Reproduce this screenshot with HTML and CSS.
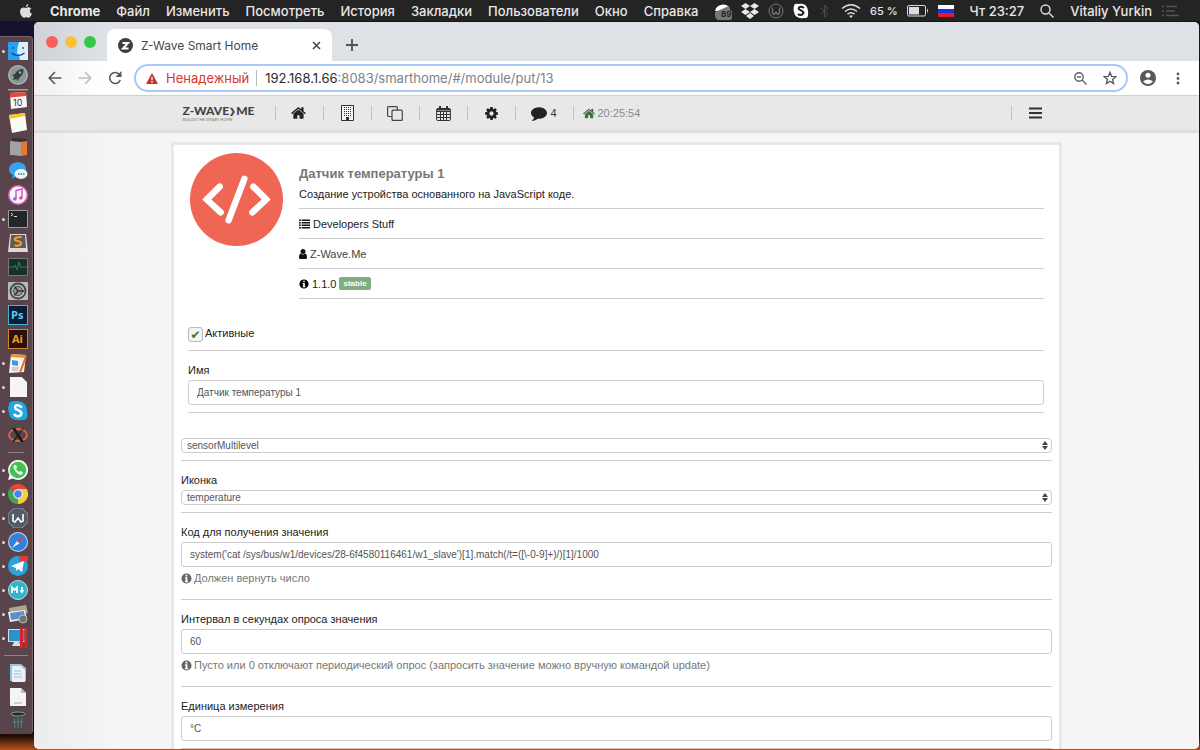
FILE: index.html
```html
<!DOCTYPE html>
<html lang="ru">
<head>
    <meta charset="UTF-8">
    <meta name="viewport" content="width=device-width, initial-scale=1.0">
    <title>Z-Wave Smart Home</title>
    <link rel="stylesheet" href="styles.css">
</head>

<body>
    <!-- Shared icons -->
    <svg class="sprite" aria-hidden="true">
        <symbol id="home" viewBox="0 0 1792 1792"><path d="M1408 992v480q0 26-19 45t-45 19h-384v-384h-256v384h-384q-26 0-45-19t-19-45v-480q0-1 .5-3t.5-3l575-474 575 474q1 2 1 6zm223-69l-62 74q-8 9-21 11h-3q-13 0-21-7l-692-577-692 577q-12 8-24 7-13-2-21-11l-62-74q-8-10-7-23.5t11-21.5l719-599q32-26 76-26t76 26l244 204v-195q0-14 9-23t23-9h192q14 0 23 9t9 23v408l219 182q10 8 11 21.5t-7 23.5z"/></symbol>
        <symbol id="info" viewBox="0 0 12 12"><path fill-rule="evenodd" d="M6 .5a5.500 5.500 0 1 0 0 11a5.500 5.500 0 0 0 0-11zM5 2h2v1.700H5zM4.300 4.700H7v3.900h.8V10H4.300V8.600H5V6h-.7z"/></symbol>
        <symbol id="updown" viewBox="0 0 6 9"><path d="M3 0l3 4H0zM3 9l3-4H0z"/></symbol>
    </svg>

    <header class="menubar">
        <nav class="menubar-menus">
            <svg class="apple" viewBox="0 0 12 14" fill="#ddd"><path d="M8.300 0c.1 1.500-1 2.900-2.400 3C5.800 1.500 7 .2 8.300 0zM6.200 3.900c.7 0 1.500-.7 2.700-.6 1 .1 1.900.5 2.500 1.300-2.200 1.400-1.800 4.300.5 5.200-.5 1.500-1.800 4-3.200 4-.9 0-1.300-.5-2.400-.5s-1.500.5-2.300.5C2.300 13.800 0 10.300 0 7.600c0-2.900 1.900-4.200 3.500-4.200 1.100 0 2 .5 2.700.5z"/></svg>
            <strong>Chrome</strong>
            <span>Файл</span>
            <span>Изменить</span>
            <span>Посмотреть</span>
            <span>История</span>
            <span>Закладки</span>
            <span>Пользователи</span>
            <span>Окно</span>
            <span>Справка</span>
        </nav>
        <div class="menubar-status">
            <svg width="18" height="18" viewBox="0 0 18 18"><path d="M1 9a8 8 0 0 1 15-2L5 9z" fill="#fff"/><path d="M1 10L15 4l1.500 5H18v6q0 3-3 3H5q-3 0-4-4z" fill="#777"/><text x="7" y="15" class="badge-text" fill="#222">89</text></svg>
            <svg width="18" height="16" viewBox="0 0 18 16" fill="#e8e8e8"><path d="M4.500 0L9 3 4.500 6 0 3zM13.500 0L18 3l-4.500 3L9 3zM4.500 6L9 9l-4.500 3L0 9zM13.500 6L18 9l-4.500 3L9 9zM9 10l4 3-4 3-4-3z"/></svg>
            <svg width="16" height="16" viewBox="0 0 16 16" fill="none" stroke="#777"><circle cx="8" cy="8" r="7"/><path d="M4.500 4.500V10l1.500 1.500L8 9l2 2.500 1.500-1.500V4.500" stroke-width="1.300"/></svg>
            <svg width="16" height="16" viewBox="0 0 16 16"><path d="M1 3q0-3 4-2 9-2 10 7 1 8-4 7-9 1-10-6-1-3 0-6z" fill="#fff"/><path d="M11 5Q8 3 6 4.500C4 7 11 7.500 10.500 10 9 13 6 12 5 11" fill="none" stroke="#222" stroke-width="2"/></svg>
            <svg width="14" height="16" viewBox="0 0 14 16" fill="none" stroke="#4c4c4c"><path d="M3 5l7 6-3.500 3V2L10 5l-7 6"/></svg>
            <svg class="wifi" width="20" height="16" viewBox="0 0 20 16" fill="none" stroke="#ddd" stroke-width="1.500"><path d="M1 5.500q9-7.500 18 0M4 8.500q6-5 12 0M6.500 11.200q3.500-2.700 7 0"/><path d="M8.200 13L10 15l1.800-2q-1.800-1.300-3.600 0z" fill="#ddd" stroke="none"/></svg>
            <span class="percent">65 %</span>
            <svg width="22" height="12" viewBox="0 0 22 12"><rect x=".5" y=".5" width="18" height="10.500" rx="1.500" fill="none" stroke="#ddd"/><rect x="2" y="2" width="10" height="7.500" fill="#ddd"/><path d="M20 3.500q2 2 0 4.500z" fill="#ddd"/></svg>
            <svg class="flag" width="16" height="12" viewBox="0 0 16 12"><path fill="#fff" d="M0 0h16v4H0z"/><path fill="#1c2ee0" d="M0 4h16v4H0z"/><path fill="#e01c24" d="M0 8h16v4H0z"/></svg>
        </div>
        <div class="menubar-user">
            <span>Чт 23:27</span>
            <svg width="14" height="14" viewBox="0 0 14 14" fill="none" stroke="#ddd" stroke-width="1.400"><circle cx="5.500" cy="5.500" r="4.500"/><path d="M9 9l4.500 4.500"/></svg>
            <span>Vitaliy Yurkin</span>
            <svg class="list" width="17" height="12" viewBox="0 0 17 12" stroke="#555" stroke-width="1.500"><path d="M0 1.500h2M4 1.500h11M0 6h2M4 6h9M0 10.500h2M4 10.500h13"/></svg>
        </div>
    </header>

    <div class="desktop">
        <aside class="dock">
            <div class="dock-item running"><svg viewBox="0 0 20 20"><rect y="1" width="20" height="18" rx="1" fill="#2a9df4"/><path d="M11 1h9v18h-8q-1-3-1-6H9q0-7 2-12z" fill="#dfeefa"/><path d="M5 6v2M15 6v2M3.500 12q6.500 5 13 0" fill="none" stroke="#17406e" stroke-width="1.200"/></svg></div>
            <div class="dock-item"><svg viewBox="0 0 20 20"><circle cx="10" cy="10" r="10" fill="#aab1b3"/><circle cx="10" cy="10" r="8.500" fill="#8c9698"/><path d="M15.500 4q-6 0-8.500 5l-3 1 2 1.500L5 15l3.500-1L10 16l1-3q4.500-3 4.500-9z" fill="#333d42"/><circle cx="12" cy="7.500" r="1.200" fill="#aab1b3"/></svg></div>
            <div class="dock-item"><svg viewBox="0 0 20 20"><path d="M0 0h20v1.500H0z" fill="#c093a4"/><path d="M2 4l16-1 1 15-16 2z" fill="#f7f7f7"/><path d="M2 4l16-1v4L2 8.500z" fill="#e7483e"/><text x="5" y="17" class="cal-text" fill="#333">10</text></svg></div>
            <div class="dock-item"><svg viewBox="0 0 20 20"><path d="M1 2l16-2 2 17-15 3z" fill="#fbfbf6"/><path d="M1 2l16-2v3L1.500 6z" fill="#f7c52c"/></svg></div>
            <div class="dock-item"><svg viewBox="0 0 20 20"><path d="M4 1l14 1 1 16-14 1z" fill="#333"/><path d="M12 5l7-1v14l-6 1z" fill="#e9772e"/><path d="M2 4l11 1v14L2 18z" fill="#a3a3a3"/></svg></div>
            <div class="dock-item"><svg viewBox="0 0 20 20"><path d="M1 9C1-1 18-1 18 8c0 5-4 7-9 7l-5 3 1-4q-4-2-4-5z" fill="#36a3f1"/><ellipse cx="13" cy="13" rx="6.500" ry="5" fill="#edf5fb"/><path d="M10 13h1.500M12.500 13H14M15 13h1.500" stroke="#3a73a8" stroke-width="1.600"/></svg></div>
            <div class="dock-item"><svg viewBox="0 0 20 20"><circle cx="10" cy="10" r="10" fill="#df65bb"/><circle cx="10" cy="10" r="8.500" fill="#faf7fb"/><path d="M8 14V5.500l6-1.500v9" fill="none" stroke="#c552ce" stroke-width="1.400"/><circle cx="6.800" cy="14" r="1.800" fill="#8f66e8"/><circle cx="12.800" cy="13" r="1.800" fill="#ee4d87"/></svg></div>
            <div class="dock-item running"><svg viewBox="0 0 20 20"><rect y="1" width="20" height="18" rx="1" fill="#9b9b9b"/><rect x="1" y="2" width="18" height="16" fill="#20262a"/><path d="M3 4l2 1.500L3 7M6 7.500h3" fill="none" stroke="#ddd"/></svg></div>
            <div class="dock-item"><svg viewBox="0 0 20 20"><path d="M2 1h16l2 18H0z" fill="#d9d9d9"/><path d="M3 2h14l1 13H2z" fill="#5b5b5b"/><path d="M13.500 4Q6 4 7 7c1 1.500 6 .5 6 3.500 0 2-3 2.500-6.500 2" fill="none" stroke="#f79a2c" stroke-width="2.200"/></svg></div>
            <div class="dock-item"><svg viewBox="0 0 20 20"><rect y="1" width="20" height="18" rx="1" fill="#777"/><rect x="1" y="2" width="18" height="16" fill="#16302c"/><path d="M1 10h5l1-2 2 5 2-8 2 6 1-1h5" fill="none" stroke="#3a7560"/></svg></div>
            <div class="dock-item"><svg viewBox="0 0 20 20"><rect y="1" width="20" height="18" rx="1" fill="#b6babb"/><circle cx="10" cy="10" r="7.500" fill="none" stroke="#444" stroke-width="1.800"/><circle cx="10" cy="10" r="4.500" fill="#999" stroke="#444"/><path d="M10 10h6M10 10L6.500 5.500M10 10l-3.500 4.500" stroke="#333" stroke-width="1.500"/></svg></div>
            <div class="dock-item"><svg viewBox="0 0 20 20"><rect x=".5" y=".5" width="19" height="19" fill="#0c1b38" stroke="#43b5cf"/><text x="3" y="14" class="adobe-text" fill="#5fd0ee">Ps</text></svg></div>
            <div class="dock-item"><svg viewBox="0 0 20 20"><rect x=".5" y=".5" width="19" height="19" fill="#2b1208" stroke="#d98328"/><text x="4" y="14" class="adobe-text" fill="#f39a33">Ai</text></svg></div>
            <div class="dock-item running"><svg viewBox="0 0 20 20"><path d="M3 1l15 1-2 17-15 1z" fill="#f6f3ec"/><path d="M3 1l15 1v3L3 4z" fill="#ee9128"/><path d="M4 7l6 1v5l-6-1z" fill="#4693df"/><path d="M4 15h7M4 17h6" stroke="#aaa"/><path d="M18 3l-5 14-1 2" stroke="#e5701d" stroke-width="2"/></svg></div>
            <div class="dock-item running"><svg viewBox="0 0 20 20"><path d="M2 0h12l5 5v15H2z" fill="#f5f5f5"/><path d="M14 0h5v5z" fill="#4d4d4d"/></svg></div>
            <div class="dock-item running"><svg viewBox="0 0 20 20"><path d="M1 4q0-4 5-4 13-1 13 10 2 9-4 9Q1 21 1 11-1 7 1 4z" fill="#21a6e6"/><path d="M14 6.500Q10 3 7.500 5c-3 4 6.500 4 6 7.500-1 4-6 3-7.500.5" fill="none" stroke="#fff" stroke-width="2.600"/></svg></div>
            <div class="dock-item"><svg viewBox="0 0 20 20"><ellipse cx="10" cy="10" rx="9" ry="6" fill="none" stroke="#cf6a4a" stroke-width="1.800"/><path d="M4 3h3l9 14h-3zM15 3h1L6 17H4z" fill="#1a1a1a"/></svg></div>
            <hr class="dock-rule">
            <div class="dock-item running"><svg viewBox="0 0 20 20"><path d="M0 20l1.500-5A10 10 0 1 1 5 18.500z" fill="#f5f5f5"/><circle cx="10" cy="10" r="8.300" fill="#3fc351"/><path d="M6.500 5q-2 2 0 5 4 6 7.500 4.500l1-2-2.500-1.500-1.500 1Q9 11 8 9l1-1.500L8 5z" fill="#fff"/></svg></div>
            <div class="dock-item running"><svg viewBox="0 0 20 20"><path d="M10 10L1.300 5a10 10 0 0 1 17.400 0z" fill="#e1483b"/><path d="M10 10L1.300 5A10 10 0 0 0 10 20l4-8z" fill="#3da756"/><path d="M10 10L10 5h8.700A10 10 0 0 1 10 20z" fill="#f8cc3c"/><circle cx="10" cy="10" r="4.800" fill="#f5f5f5"/><circle cx="10" cy="10" r="3.700" fill="#4285f4"/></svg></div>
            <div class="dock-item running"><svg viewBox="0 0 20 20"><path d="M6 0h8l6 6v8l-6 6H6l-6-6V6z" fill="#515d69" stroke="#8d98a2"/><path d="M5 6v7l2 1 3-4 3 4 2-1V6" fill="none" stroke="#fff" stroke-width="1.600"/></svg></div>
            <div class="dock-item running"><svg viewBox="0 0 20 20"><circle cx="10" cy="10" r="10" fill="#d0d7de"/><circle cx="10" cy="10" r="9" fill="#2c83e0"/><path d="M16 4l-4.500 7.500L9 9z" fill="#e74236"/><path d="M4 16l5-7 2.500 2.500z" fill="#eee"/></svg></div>
            <div class="dock-item running"><svg viewBox="0 0 20 20"><circle cx="10" cy="10" r="10" fill="#2ca2dc"/><path d="M3 10l13-5-2 11-4-3-2 2v-3z" fill="#fff"/><rect x="11" width="9" height="5" rx="1" fill="#e33b3b"/></svg></div>
            <div class="dock-item running"><svg viewBox="0 0 20 20"><circle cx="10" cy="10" r="9.500" fill="#30b4c9" stroke="#b7e2e9"/><path d="M4 13V7.500L6.500 10 9 7.500V13M14 7v5" fill="none" stroke="#fff" stroke-width="1.800"/><path d="M11.500 10h5L14 13.500z" fill="#fff"/></svg></div>
            <div class="dock-item running"><svg viewBox="0 0 20 20"><path d="M1 4l17-3 2 8L2 13z" fill="#aba694"/><path d="M0 8l17-2 2 9-17 3z" fill="#f1f1f1"/><path d="M2 9l14-2 1 7-14 2z" fill="#608dc9"/><circle cx="15" cy="15" r="4" fill="#737373" stroke="#bbb"/></svg></div>
            <div class="dock-item running"><svg viewBox="0 0 20 20"><rect y="1" width="18" height="13" fill="#d7dce0"/><rect x="1" y="2" width="16" height="11" fill="#2993ce"/><path d="M6 14h5l2 4H4z" fill="#ddd"/><path d="M13.500 0v20M18 0v20" stroke="#d82424" stroke-width="3"/></svg></div>
            <hr class="dock-rule wide">
            <div class="dock-item"><svg viewBox="0 0 20 20"><path d="M2 1h11l5 4v13H2z" fill="#8ec5e4"/><path d="M4 3h9l4 4v12H4z" fill="#e8f2f7"/><path d="M6 8h7M6 11h8M6 14h8" stroke="#aac0cc"/></svg></div>
            <div class="dock-item"><svg viewBox="0 0 20 20"><path d="M2 1h11l5 5v13H2z" fill="#f4f4f4"/><path d="M13 1v5h5z" fill="#bbb"/><path d="M6 16h8" stroke="#aaa"/></svg></div>
            <div class="dock-item"><svg viewBox="0 0 20 20"><path d="M3 3h14l-2 16H5z" fill="#444b4b"/><ellipse cx="10" cy="3" rx="7" ry="2" fill="#252929" stroke="#899"/><path d="M6 7l1 10M10 7v10M14 7l-1 10M5 11h10" stroke="#6d7777"/></svg></div>
        </aside>

        <main class="window">
            <div class="tabstrip">
                <div class="lights"><i class="light red"></i><i class="light yellow"></i><i class="light green"></i></div>
                <div class="tab">
                    <svg width="15" height="15" viewBox="0 0 15 15"><circle cx="7.500" cy="7.500" r="7.500" fill="#3c3f42"/><path d="M4.500 5h5.500l-5 5.500h5.500" fill="none" stroke="#fff" stroke-width="2"/></svg>
                    <span class="tab-title">Z-Wave Smart Home</span>
                    <button type="button" class="icon-btn" aria-label="Закрыть вкладку"><svg width="9" height="9" viewBox="0 0 9 9" stroke="#444" stroke-width="1.500"><path d="M1 1l7 7M8 1L1 8"/></svg></button>
                </div>
                <button type="button" class="icon-btn new-tab" aria-label="Новая вкладка"><svg width="12" height="12" viewBox="0 0 12 12" stroke="#505357" stroke-width="1.800"><path d="M6 0v12M0 6h12"/></svg></button>
            </div>

            <div class="toolbar">
                <button type="button" class="icon-btn" aria-label="Назад"><svg width="14" height="14" viewBox="0 0 14 14" fill="none" stroke="#55585c" stroke-width="1.600"><path d="M13.500 7H1.500M7 1L1.200 7 7 13"/></svg></button>
                <button type="button" class="icon-btn" aria-label="Вперёд"><svg width="14" height="14" viewBox="0 0 14 14" fill="none" stroke="#bcbec1" stroke-width="1.600"><path d="M.5 7h12M7 1l5.800 6L7 13"/></svg></button>
                <button type="button" class="icon-btn" aria-label="Обновить"><svg width="14" height="14" viewBox="0 0 14 14"><path d="M12.300 9A5.500 5.500 0 1 1 11.500 3.500" fill="none" stroke="#55585c" stroke-width="1.600"/><path d="M13.500 0v6h-6z" fill="#55585c"/></svg></button>
                <div class="omnibox">
                    <svg width="12" height="11" viewBox="0 0 12 11"><path d="M6 0l6 11H0z" fill="#c5322b"/><path d="M6 4v3.300M6 8.300v1.400" stroke="#fff" stroke-width="1.300"/></svg>
                    <span class="insecure">Ненадежный</span>
                    <span class="url"><b>192.168.1.66</b>:8083/smarthome/#/module/put/13</span>
                    <button type="button" class="icon-btn" aria-label="Масштаб"><svg width="13" height="13" viewBox="0 0 13 13" fill="none" stroke="#5f6368" stroke-width="1.400"><circle cx="5" cy="5" r="4.200"/><path d="M8 8l4.500 4.500M3 5h4"/></svg></button>
                    <button type="button" class="icon-btn" aria-label="В закладки"><svg width="14" height="14" viewBox="0 0 14 14" fill="none" stroke="#55585c" stroke-width="1.300"><path d="M7 1.300l1.600 4 4.300.3-3.300 2.800 1 4.200L7 10.300l-3.600 2.300 1-4.200L1.100 5.600l4.300-.3z"/></svg></button>
                </div>
                <button type="button" class="icon-btn" aria-label="Профиль"><svg width="16" height="16" viewBox="0 0 16 16"><circle cx="8" cy="8" r="8" fill="#55585c"/><circle cx="8" cy="5.300" r="2.500" fill="#fff"/><path d="M3 11.500q5-4 10 0-5 5-10 0z" fill="#fff"/></svg></button>
                <button type="button" class="icon-btn dots" aria-label="Меню"><svg width="4" height="13" viewBox="0 0 4 13" fill="#55585c"><circle cx="2" cy="2" r="1.400"/><circle cx="2" cy="6.500" r="1.400"/><circle cx="2" cy="11" r="1.400"/></svg></button>
            </div>

            <div class="page">
                <div class="navbar">
                    <nav class="navbar-inner">
                        <a href="#" class="logo"><span class="logo-name">Z-WAVE<i>&#x276F;</i>ME</span><small>BUILDS THE SMART HOME</small></a>
                        <a href="#" class="nav-item" aria-label="Главная"><svg width="16" height="16"><use href="#home"/></svg></a>
                        <a href="#" class="nav-item" aria-label="Комнаты"><svg width="13" height="16" viewBox="0 0 13 16"><path d="M.5.5h12v15H.5z" fill="#f4f4f4" stroke="#333"/><path d="M3.500 2v9M5.500 2v9M7.500 2v9M9.500 2v9" stroke="#333" stroke-dasharray="1 1"/><path d="M5 12h3v3H5z" fill="#333"/></svg></a>
                        <a href="#" class="nav-item" aria-label="Элементы"><svg width="16" height="15" viewBox="0 0 16 15" fill="none" stroke="#444" stroke-width="1.200"><path d="M5 10.500H1.500q-.9 0-.9-.9V1.500q0-.9.9-.9h8q.9 0 .9.9V4"/><rect x="5" y="4.200" width="10.300" height="10.200" rx="1"/></svg></a>
                        <a href="#" class="nav-item" aria-label="События"><svg width="15" height="15" viewBox="0 0 15 15" fill="none" stroke="#333"><rect x=".6" y="2.500" width="13.800" height="12" rx="1"/><path d="M1 3.500h13" stroke-width="2"/><path d="M4 0v4M11 0v4" stroke-width="2"/><path d="M1 8.500h13M1 11.500h13M4.500 5v9M7.500 5v9M10.500 5v9M1 5.500h13"/></svg></a>
                        <a href="#" class="nav-item" aria-label="Настройки"><svg width="15" height="15" viewBox="0 0 1792 1792"><path d="M1152 896q0-106-75-181t-181-75-181 75-75 181 75 181 181 75 181-75 75-181zm512-109v222q0 12-8 23t-20 13l-185 28q-19 54-39 91 35 50 107 138 10 12 10 25t-9 23q-27 37-99 108t-94 71q-12 0-26-9l-138-108q-44 23-91 38-16 136-29 186-7 28-36 28h-222q-14 0-24.500-8.500t-11.500-21.500l-28-184q-49-16-90-37l-141 107q-10 9-25 9-14 0-25-11-126-114-165-168-7-10-7-23 0-12 8-23 15-21 51-66.500t54-70.500q-27-50-41-99l-183-27q-13-2-21-12.500t-8-23.500v-222q0-12 8-23t19-13l186-28q14-46 39-92-40-57-107-138-10-12-10-24 0-10 9-23 26-36 98.500-107.500t94.500-71.500q13 0 26 10l138 107q44-23 91-38 16-136 29-186 7-28 36-28h222q14 0 24.500 8.500t11.500 21.500l28 184q49 16 90 37l142-107q9-9 24-9 13 0 25 10 129 119 165 170 7 8 7 22 0 12-8 23-15 21-51 66.500t-54 70.500q26 50 41 98l183 28q13 2 21 12.500t8 23.500z"/></svg></a>
                        <a href="#" class="nav-item messages"><svg width="16" height="16" viewBox="0 0 1792 1792"><path d="M1792 896q0 174-120 321.500t-326 233-450 85.500q-70 0-145-8-198 175-460 242-49 14-114 22-17 2-30.500-9t-17.500-29v-1q-3-4-.5-12t2-10 4.500-9.500l6-9 7-8.500 8-9q7-8 31-34.500t34.500-38 31-39.500 32.500-51 27-59 26-76q-157-89-247.500-220t-90.500-281q0-130 71-248.500t191-204.500 286-136.500 348-50.500q244 0 450 85.500t326 233 120 321.500z"/></svg>4</a>
                        <span class="nav-item time"><svg width="13" height="13"><use href="#home"/></svg>20:25:54</span>
                        <button type="button" class="nav-item burger" aria-label="Меню"><svg width="13" height="12" viewBox="0 0 13 12" stroke="#333" stroke-width="2"><path d="M0 1.500h13M0 6h13M0 10.500h13"/></svg></button>
                    </nav>
                </div>

                <form class="card">
                    <section class="summary">
                        <svg class="module-icon" viewBox="0 0 94 94"><circle cx="47" cy="47" r="47" fill="#ef6655"/><path d="M30 34L17 47l14 13M64 34l13 13-14 13M55 26L39 68" fill="none" stroke="#fff" stroke-width="6.500" stroke-linecap="round"/></svg>
                        <div class="info">
                            <div class="info-head">
                                <h1>Датчик температуры 1</h1>
                                <p>Создание устройства основанного на JavaScript коде.</p>
                            </div>
                            <p class="info-row"><svg width="11" height="10" viewBox="0 0 11 10" stroke="#111" stroke-width="1.600"><path d="M0 1.200h1.800M2.600 1.200H11M0 3.700h1.800M2.600 3.700H11M0 6.200h1.800M2.600 6.200H11M0 8.700h1.800M2.600 8.700H11"/></svg>Developers Stuff</p>
                            <p class="info-row author"><svg width="8" height="10" viewBox="0 0 8 10" fill="#111"><circle cx="4" cy="2.600" r="2.500"/><path d="M1.700 4.500Q4 6.500 6.300 4.500 8 5 8 8.500 8 10 6.800 10H1.200Q0 10 0 8.500 0 5 1.700 4.500z"/></svg><a href="#">Z-Wave.Me</a></p>
                            <p class="info-row"><svg width="10" height="10"><use href="#info"/></svg>1.1.0 <span class="label-stable">stable</span></p>
                        </div>
                    </section>

                    <div class="inset">
                        <div class="group active">
                            <input type="checkbox" id="active" class="check" checked>
                            <label for="active">Активные</label>
                        </div>
                        <div class="group">
                            <label for="name">Имя</label>
                            <input type="text" id="name" class="text-input" value="Датчик температуры 1">
                        </div>
                    </div>

                    <div class="group first-select">
                        <div class="select">
                            <select aria-label="Тип устройства"><option>sensorMultilevel</option></select>
                            <svg width="6" height="9"><use href="#updown"/></svg>
                        </div>
                    </div>
                    <div class="group">
                        <label for="icon">Иконка</label>
                        <div class="select">
                            <select id="icon"><option>temperature</option></select>
                            <svg width="6" height="9"><use href="#updown"/></svg>
                        </div>
                    </div>
                    <div class="group">
                        <label for="code">Код для получения значения</label>
                        <input type="text" id="code" class="text-input" value="system('cat /sys/bus/w1/devices/28-6f4580116461/w1_slave')[1].match(/t=([\-0-9]+)/)[1]/1000">
                        <p class="help"><svg width="11" height="11"><use href="#info"/></svg>Должен вернуть число</p>
                    </div>
                    <div class="group">
                        <label for="interval">Интервал в секундах опроса значения</label>
                        <input type="text" id="interval" class="text-input" value="60">
                        <p class="help"><svg width="11" height="11"><use href="#info"/></svg>Пусто или 0 отключают периодический опрос (запросить значение можно вручную командой update)</p>
                    </div>
                    <div class="group">
                        <label for="unit">Единица измерения</label>
                        <input type="text" id="unit" class="text-input" value="°C">
                    </div>
                </form>
            </div>
        </main>
    </div>
</body>
</html>
```
FILE: styles.css
```css
* {
    box-sizing: border-box;
    margin: 0;
    padding: 0;
}

body {
    display: flex;
    flex-direction: column;
    height: 100vh;
    overflow: hidden;
    background-color: #17102e;
    font-family: "Liberation Sans", Arial, sans-serif;
    font-size: 11px;
    color: #222;
}

svg {
    flex: none;
    display: block;
}

a {
    color: inherit;
    text-decoration: none;
}

.sprite {
    position: absolute;
    width: 0;
    height: 0;
}

/* macOS menu bar */
.menubar {
    display: flex;
    flex: none;
    align-items: center;
    height: 21px;
    padding: 0 21px 0 20px;
    background-color: #242424;
    color: #e8e8e8;
    font: 500 13px Inter, sans-serif;
    white-space: nowrap;
}

.menubar-menus {
    display: flex;
    align-items: center;
    gap: 16px;
    flex: 1;
}

.apple {
    width: 12px;
    height: 14px;
    margin-right: 2px;
}

.menubar-status {
    display: flex;
    align-items: center;
    gap: 9px;
}

.percent {
    font-size: 11px;
}

.menubar-user {
    display: flex;
    align-items: center;
    gap: 16px;
    margin-left: 16px;
}

.list {
    margin-left: -6px;
}

.badge-text {
    font: bold 8px Inter, sans-serif;
}

/* Dock */
.desktop {
    display: flex;
    flex: 1;
    min-height: 0;
    padding: 1px 1px 1px 0;
    background: linear-gradient(#17102e 60%, #1c0c05 98%, #b3531b);
}

.dock {
    flex: none;
    align-self: flex-start;
    width: 33px;
    margin: 14px 1px 0 0;
    padding: 2px 0 1px;
    border-top: 1px solid #77646c;
    border-right: 1px solid #77646c;
    border-radius: 0 4px 4px 0;
    background-color: #59444b;
}

.dock-item {
    display: flex;
    align-items: center;
    height: 24px;
    gap: 3px;
    padding-left: 2px;
}

.dock-item::before {
    content: "";
    width: 3px;
    height: 3px;
    border-radius: 50%;
}

.dock-item.running::before {
    background-color: #e0d4d8;
}

.dock-item svg {
    width: 20px;
    height: 20px;
}

.dock-rule {
    width: 16px;
    margin: 5px auto;
    border: 0;
    border-top: 1px solid #947f86;
}

.dock-rule.wide {
    width: 24px;
}

.cal-text {
    font: 9px Inter, sans-serif;
}

.adobe-text {
    font: bold 11px "Open Sans", sans-serif;
}

/* Browser window */
.window {
    display: flex;
    flex-direction: column;
    flex: 1;
    min-width: 0;
    overflow: hidden;
    border-radius: 5px;
    background-color: #f5f5f5;
}

.tabstrip {
    display: flex;
    flex: none;
    align-items: flex-end;
    height: 39px;
    padding-left: 12px;
    background: linear-gradient(90deg, #cfd2d7, #dee1e6 70px);
}

.lights {
    display: flex;
    gap: 7px;
    width: 61px;
    height: 32px;
    padding-top: 7px;
}

.light {
    width: 12px;
    height: 12px;
    border-radius: 50%;
}

.red {
    background-color: #f9605a;
}

.yellow {
    background-color: #fbbe3f;
}

.green {
    background-color: #34c84a;
}

.tab {
    display: flex;
    align-items: center;
    gap: 8px;
    width: 225px;
    height: 32px;
    padding: 0 11px;
    border-radius: 8px 8px 0 0;
    background-color: #fff;
    color: #45484c;
    font: 12px Inter, sans-serif;
}

.tab-title {
    flex: 1;
}

.icon-btn {
    display: flex;
    border: none;
    background: none;
    cursor: pointer;
}

.new-tab {
    margin: 0 0 10px 14px;
}

.toolbar {
    display: flex;
    flex: none;
    align-items: center;
    gap: 16px;
    height: 34px;
    padding: 0 19px 0 14px;
    background: linear-gradient(90deg, #f0f0f0, #fff 70px);
}

.omnibox {
    display: flex;
    flex: 1;
    align-items: center;
    gap: 8px;
    height: 28px;
    margin: 0 -4px 0 -4px;
    padding: 0 9px 0 10px;
    border: 2px solid #a9c8f5;
    border-radius: 14px;
    background-color: #fff;
    color: #7d8287;
    font: 13px Inter, sans-serif;
}

.omnibox .icon-btn {
    margin-left: 8px;
}

.dots {
    margin-left: 4px;
}

.insecure {
    padding-right: 7px;
    border-right: 1px solid #bbb;
    color: #cf3a33;
}

.url {
    flex: 1;
}

.url b {
    color: #2a2c2e;
    font-weight: 400;
}

/* Page header */
.page {
    flex: 1;
    min-height: 0;
    overflow: hidden;
    border-top: 1px solid #d0d0d0;
    background: linear-gradient(90deg, #ececec, #f5f5f5 80px);
}

.navbar {
    height: 37px;
    border-bottom: 3px solid #dedede;
    background-color: #e8e8e8;
}

.navbar-inner {
    display: flex;
    align-items: center;
    max-width: 890px;
    height: 34px;
    margin: 0 auto;
    padding: 0 3px 0 11px;
}

.logo {
    display: flex;
    flex-direction: column;
    width: 92px;
    color: #444;
    font: 900 12px Lato, sans-serif;
    white-space: nowrap;
}

.logo-name {
    display: flex;
    align-items: center;
    height: 12px;
}

.logo i {
    font-size: 8px;
    font-style: normal;
}

.logo small {
    color: #777;
    font: 4px Lato, sans-serif;
}

.nav-item {
    display: flex;
    align-items: center;
    justify-content: center;
    width: 48px;
    height: 14px;
    border: 0;
    border-left: 1px solid #c2c2c2;
    background: none;
    color: #333;
    fill: #222;
}

.messages {
    gap: 3px;
    width: 58px;
}

.time {
    justify-content: flex-start;
    gap: 2px;
    width: auto;
    padding-left: 9px;
    color: #888;
    fill: #3c763d;
}

.burger {
    margin-left: auto;
}

/* Module form */
.card {
    max-width: 891px;
    margin: 9px auto 0;
    padding: 0 7px 20px;
    border: 3px solid #e8e8e8;
    background-color: #fff;
}

.summary {
    display: flex;
    gap: 16px;
    padding: 7px 8px 0 9px;
}

.module-icon {
    width: 93px;
    height: 95px;
}

.info {
    flex: 1;
    padding-top: 12px;
}

.info-head {
    padding-bottom: 4px;
    border-bottom: 1px solid #ccc;
    line-height: 20px;
}

h1 {
    color: #777;
    font-size: 13px;
    line-height: 20px;
}

.info-row {
    display: flex;
    align-items: center;
    gap: 3px;
    height: 30px;
    border-bottom: 1px solid #ccc;
}

.author {
    color: #444;
}

.label-stable {
    padding: 0 4px;
    border-radius: 2px;
    background-color: #80ad80;
    color: #fff;
    font-size: 8px;
    font-weight: bold;
    line-height: 13px;
}

.inset {
    padding: 0 8px 0 7px;
}

.group {
    padding: 12px 0 7px;
    border-bottom: 1px solid #ccc;
}

.group label {
    display: block;
    margin-bottom: 3px;
    line-height: 14px;
}

.group.active {
    display: flex;
    gap: 2px;
    padding-top: 27px;
}

.check {
    display: grid;
    place-items: center;
    width: 15px;
    height: 15px;
    margin: 1px 0;
    appearance: none;
    border: 1px solid #bbb;
    border-radius: 3px;
    background-color: #f1f5f1;
}

.check:checked::before {
    content: "✔";
    color: #3c763d;
    font: 12px/12px "DejaVu Sans", sans-serif;
}

.text-input {
    display: block;
    width: 100%;
    height: 25px;
    padding: 0 8px;
    border: 1px solid #ccc;
    border-radius: 3px;
    background-color: #fff;
    color: #555;
    font: inherit;
    font-size: 10px;
}

.first-select {
    padding-top: 25px;
}

.select {
    display: grid;
    align-items: center;
}

.select select,
.select svg {
    grid-area: 1 / 1;
}

.select select {
    width: 100%;
    height: 15px;
    padding: 0 5px;
    appearance: none;
    border: 1px solid #ccc;
    border-radius: 4px;
    background-color: #fff;
    color: #555;
    font: inherit;
    font-size: 10px;
    line-height: 13px;
}

.select svg {
    justify-self: end;
    margin-right: 4px;
    fill: #444;
    pointer-events: none;
}

.help {
    display: flex;
    align-items: center;
    gap: 2px;
    height: 14px;
    margin: 4px 0 7px;
    color: #777;
    fill: #666;
}
```
